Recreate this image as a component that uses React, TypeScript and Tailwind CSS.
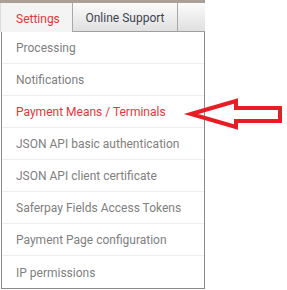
const items = [
    'Processing',
    'Notifications',
    'Payment Means / Terminals',
    'JSON API basic authentication',
    'JSON API client certificate',
    'Saferpay Fields Access Tokens',
    'Payment Page configuration',
    'IP permissions',
]

const App = () => {
    const active = 'Payment Means / Terminals'

    return (
        <div className="relative w-[287px] h-[290px] bg-white font-['Roboto',sans-serif] overflow-hidden">
            <div className="w-[205px]">
                <div className="h-[3px] bg-[#aba095]" />
                <div className="flex h-[29px]">
                    <div className="w-[73px] bg-[#f4f4f4] border-l border-l-[#dcdcdc] border-r border-r-[#a8a8a8] pl-[15px] pt-[2px] flex items-center text-[12px] text-[#e3363b]">
                        Settings
                    </div>
                    <div className="w-[105px] bg-gradient-to-b from-[#fbfbfb] to-[#e0e0e0] border-r border-r-[#a8a8a8] border-b border-b-[#a0a0a0] pt-[2px] flex items-center justify-center text-[12px] text-[#3f4450]">
                        Online Support
                    </div>
                    <div className="flex-1 bg-gradient-to-b from-[#fbfbfb] to-[#e0e0e0] border-b border-b-[#a0a0a0]" />
                </div>
            </div>
            <div className="ml-px w-[204px] border-l border-r border-b border-[#8a8a8a]">
                {items.map((item, i) => (
                    <div
                        key={item}
                        className={`h-[32px] flex items-center pl-[14px] pt-px text-[12px] ${i < items.length - 1 ? 'border-b border-[#eeeeee]' : ''} ${item === active ? 'text-[#e3363b]' : 'text-[#808080]'}`}
                    >
                        {item}
                    </div>
                ))}
            </div>
            <svg className="absolute left-0 top-0" width="287" height="290" viewBox="0 0 287 290">
                <polygon
                    points="191,114 236,101 236,108 280,108 280,121 236,121 236,127"
                    fill="none"
                    stroke="#e81c24"
                    strokeWidth="4"
                    strokeLinejoin="miter"
                />
            </svg>
        </div>
    )
}

export default App
